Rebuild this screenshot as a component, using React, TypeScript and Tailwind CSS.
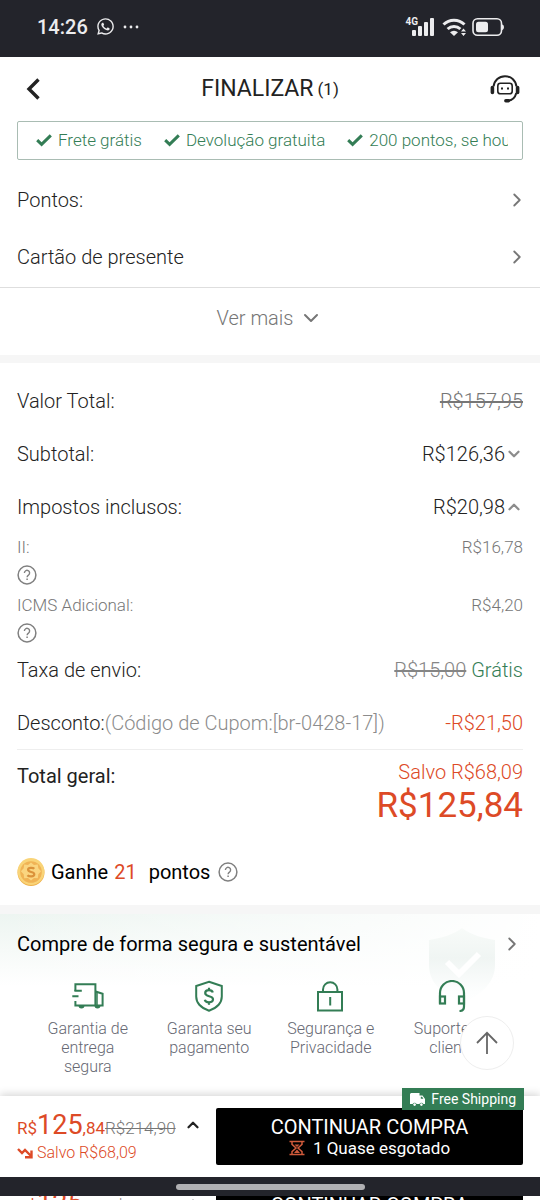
import React from "react";
import { FaWhatsapp } from "react-icons/fa";
import { ChevronDown, ChevronRight, ChevronUp } from "lucide-react";

const perks = ["Frete grátis", "Devolução gratuita", "200 pontos, se houver atraso"];

const taxes = [
  { label: "II:", value: "R$16,78" },
  { label: "ICMS Adicional:", value: "R$4,20" },
];

const HelpIcon: React.FC = () => (
  <svg viewBox="0 0 20 20" className="w-5 h-5 text-[#808080]" fill="none" stroke="currentColor">
    <circle cx="10" cy="10" r="8.9" strokeWidth="1.5" />
    <path d="M7.400 7.900a2.600 2.600 0 1 1 4.200 2.100c-.9.7-1.500 1.100-1.500 2.300" strokeWidth="1.400" />
    <path d="M10.100 13.600v1.500" strokeWidth="1.500" />
  </svg>
);

const CheckIcon: React.FC = () => (
  <svg viewBox="0 0 16 14" className="w-4 h-[14px] shrink-0" fill="none" stroke="#337d55" strokeWidth="3">
    <path d="M1.200 7.200 5.600 11.400 14.800 2.400" />
  </svg>
);

const SupportIcon: React.FC = () => (
  <svg viewBox="0 0 30 30" className="w-[30px] h-[30px]" fill="none" stroke="#222" strokeWidth="2">
    <path d="M3.600 12.500C4.300 6.400 9 2.200 15 2.200s10.700 4.200 11.400 10.300" />
    <path d="M2.400 13.500v5M27.600 13.500v5" strokeWidth="3.600" strokeLinecap="round" />
    <rect x="7.800" y="9.300" width="14.400" height="10.500" rx="2.600" strokeWidth="1.600" />
    <path d="M26.300 19c-1 4-4 7.300-8.600 7.800" />
    <path d="M15.800 26.800h2.600" strokeWidth="3.400" strokeLinecap="round" />
    <path d="M12 13.400v2.200M18 13.400v2.200" />
  </svg>
);

const CoinIcon: React.FC = () => (
  <svg viewBox="0 0 28 28" className="w-7 h-7">
    <circle cx="14" cy="14.500" r="13.500" fill="#eeb04a" />
    <circle cx="14" cy="13.500" r="13.400" fill="#f9d478" />
    <circle cx="14" cy="14" r="10.800" fill="#f0b355" />
    <path d="M14 4.500l3 2.400 3.800-.5.500 3.800 2.800 3-2.800 3-.5 4-3.800-.3-3 2.500-3-2.500-3.800.3-.5-4-2.800-3 2.800-3 .5-3.800 3.800.5z" fill="#fad580" />
    <path d="M17.300 10.700c-1.200-1.200-6.200-1.500-6.200 1 0 3 6.200 1.500 6.200 4.600 0 2.700-5.400 2.500-6.900.9" fill="none" stroke="#db923a" strokeWidth="2.200" />
  </svg>
);

const TruckIcon: React.FC = () => (
  <svg viewBox="0 0 32 32" className="w-8 h-8" fill="none" stroke="#337d55" strokeWidth="2">
    <path d="M3.400 11V4.200h20V25.500" />
    <path d="M2.400 10.800h7.400M.3 16.200h6.200M3.400 21v4.500h27.200V13.800l-7-2.300" />
    <path d="M25 12v13" strokeWidth="1.500" />
    <path d="M6.500 25.500a3 3 0 0 0 6 0zM22.500 25.500a3 3 0 0 0 6 0z" fill="#337d55" stroke="none" />
  </svg>
);

const ShieldMoneyIcon: React.FC = () => (
  <svg viewBox="0 0 32 32" className="w-8 h-8" fill="none" stroke="#337d55" strokeWidth="2">
    <path d="M16 1.800 28.800 6v10.500c0 6.800-5.300 11.500-12.800 14.200C8.500 28 3.200 23.300 3.200 16.500V6z" />
    <path d="M19.800 12.500c-.5-1.700-1.900-2.300-3.800-2.300-2.300 0-3.800 1-3.800 2.900 0 4.400 7.800 1.800 7.800 6.200 0 1.900-1.700 3-4 3-2.200 0-3.800-.8-4.200-2.600M16 7.700v2.500M16 22.300v2.500" strokeWidth="2.200" />
  </svg>
);

const LockIcon: React.FC = () => (
  <svg viewBox="0 0 32 32" className="w-8 h-8" fill="none" stroke="#337d55" strokeWidth="2">
    <rect x="3" y="12" width="24" height="18.500" />
    <path d="M8 12V9.500a7.200 7.200 0 0 1 14.400 0V12M15.200 17v8.500" />
  </svg>
);

const HeadsetIcon: React.FC = () => (
  <svg viewBox="0 0 32 32" className="w-8 h-8" fill="none" stroke="#337d55" strokeWidth="2.200">
    <path d="M4 23.500V13a12 12 0 0 1 24 0v13.500c0 3-1.500 4.500-4.500 4.500" />
    <rect x="4" y="16.500" width="5" height="7" />
    <rect x="23" y="16.500" width="5" height="7" />
  </svg>
);

const guarantees = [
  { icon: <TruckIcon />, label: "Garantia de entrega segura" },
  { icon: <ShieldMoneyIcon />, label: "Garanta seu pagamento" },
  { icon: <LockIcon />, label: "Segurança e Privacidade" },
  { icon: <HeadsetIcon />, label: "Suporte ao cliente" },
];

const StatusBar: React.FC = () => (
  <div className="h-[57px] shrink-0 bg-[#23242b] text-[#ececee] flex items-center justify-between pl-[37px] pr-[35px] pb-1">
    <div className="flex items-center gap-2">
      <span className="text-xl font-medium">14:26</span>
      <FaWhatsapp size={19} />
      <svg viewBox="0 0 16 4" className="w-4 h-1" fill="currentColor">
        <circle cx="2" cy="2" r="1.400" />
        <circle cx="8" cy="2" r="1.400" />
        <circle cx="14" cy="2" r="1.400" />
      </svg>
    </div>
    <div className="flex items-center gap-1">
      <div className="flex items-start">
        <span className="text-[10px] leading-[10px] font-bold -mr-[6px]">4G</span>
        <svg viewBox="0 0 22 20" className="w-[22px] h-5" fill="currentColor">
          <rect y="13" width="4" height="6" rx="1" />
          <rect x="6" y="9" width="4" height="10" rx="1" />
          <rect x="12" y="5" width="4" height="14" rx="1" />
          <rect x="18" y="1" width="4" height="18" rx="1" />
        </svg>
      </div>
      <svg viewBox="0 0 26 20" className="w-[26px] h-5 ml-1" fill="none" stroke="currentColor" strokeWidth="3">
        <path d="M1.500 7.500a15 15 0 0 1 21 0" />
        <path d="M5.600 12a9.500 9.500 0 0 1 12.800 0" />
        <path d="M8 15.300a6 6 0 0 1 8 0L12 19z" fill="currentColor" stroke="none" />
        <path d="M19 14.500l2.500-3 2.500 3zM19 16l2.500 3 2.500-3z" fill="currentColor" stroke="none" />
      </svg>
      <svg viewBox="0 0 33 20" className="w-[33px] h-5" fill="none" stroke="currentColor" strokeWidth="1.600">
        <rect x="1" y="1.800" width="28.500" height="16.500" rx="4.500" />
        <rect x="4" y="4.800" width="12" height="10.500" rx="2.500" fill="currentColor" stroke="none" />
        <path d="M30 7.500c2.600 0 2.600 5.400 0 5.400z" fill="currentColor" stroke="none" />
      </svg>
    </div>
  </div>
);

const CheckoutBar: React.FC = () => (
  <div className="flex items-center justify-between bg-white px-[17px] py-3">
    <div>
      <div className="flex items-center gap-2">
        <div className="h-8 text-[17px] leading-8 whitespace-nowrap">
          <span className="text-[#dd4a26]">
            R$<span className="text-[27px]">125</span>,84
          </span>
          <s className="font-light text-[#767676]">R$214,90</s>
        </div>
        <button type="button" aria-label="Ver detalhes">
          <ChevronUp size={18} strokeWidth={3} />
        </button>
      </div>
      <div className="flex items-center gap-1 text-base leading-6 font-light text-[#dd4a26]">
        <svg viewBox="0 0 16 12" className="w-4 h-3" fill="none" stroke="currentColor" strokeWidth="2.400">
          <path d="M1 2l4 4 3-3 6 6M14.500 3.500v6.800H8" />
        </svg>
        Salvo R$68,09
      </div>
    </div>
    <button type="button" className="relative w-[307px] h-[57px] rounded-xs bg-black text-white">
      <span className="absolute -right-px -top-5 h-[22px] bg-[#337d55] px-2 flex items-center gap-[6px] text-sm leading-5">
        <svg viewBox="0 0 15 13" className="w-[15px] h-[13px]" fill="white">
          <path d="M1 0h8.500v2.500h3L15 6v5h-1.600a2.200 2.200 0 0 0-4 0H6.600a2.200 2.200 0 0 0-4 0H0V1z" />
          <circle cx="4.600" cy="11.600" r="1.300" />
          <circle cx="11.400" cy="11.600" r="1.300" />
          <path d="M10.800 3.700h1.300l1.300 2h-2.600z" fill="#337d55" />
        </svg>
        Free Shipping
      </span>
      <span className="block text-xl leading-[22px]">CONTINUAR COMPRA</span>
      <span className="flex items-center justify-center gap-2 text-[17px] leading-5">
        <svg viewBox="0 0 16 16" className="w-4 h-4" fill="none" stroke="#cf5a3b" strokeWidth="1.500">
          <path d="M.5 1.500h15M.5 14.500h15M3 1.500v2.800L7 8l-4 3.700v2.800M13 1.500v2.800L9 8l4 3.700v2.800" />
          <path d="M5.500 4.500h5L8 7zM8 9.500l3 3.500H5z" fill="#cf5a3b" stroke="none" />
        </svg>
        1 Quase esgotado
      </span>
    </button>
  </div>
);

const App: React.FC = () => {
  return (
    <div className="min-h-screen flex flex-col bg-white text-[#222] text-xl font-['Roboto',sans-serif]">
      <StatusBar />

      <header className="h-16 shrink-0 flex items-center justify-between px-5">
        <button type="button" aria-label="Voltar" className="w-[30px]">
          <svg viewBox="0 0 26 26" className="w-[26px] h-[26px]" fill="none" stroke="#222" strokeWidth="3.400">
            <path d="M18.500 3.500 9 13l9.500 9.500" />
          </svg>
        </button>
        <h1 className="text-[23px]">
          FINALIZAR<span className="text-[17px] align-[1px] ml-1">(1)</span>
        </h1>
        <button type="button" aria-label="Atendimento">
          <SupportIcon />
        </button>
      </header>

      <main className="flex-1">
        <div className="mx-[17px] h-[39px] pl-[18px] pr-[14px] border border-[#a9bcb3] rounded-xs flex">
          <ul className="flex items-center gap-[22px] overflow-hidden text-[17px] font-light text-[#337d55]">
            {perks.map((perk) => (
              <li key={perk} className="flex items-center gap-[6px] whitespace-nowrap">
                <CheckIcon />
                {perk}
              </li>
            ))}
          </ul>
        </div>

        <div className="pt-[11px] pb-[2px] border-b border-[#dedede] font-light">
          {["Pontos:", "Cartão de presente"].map((item) => (
            <button key={item} type="button" className="w-full h-[57px] pl-[17px] pr-3 flex items-center justify-between">
              {item}
              <ChevronRight size={22} strokeWidth={2} className="text-[#777]" />
            </button>
          ))}
        </div>
        <button type="button" className="w-full h-[67px] pb-2 flex items-center justify-center gap-[6px] font-light text-[#767676]">
          Ver mais
          <ChevronDown size={24} strokeWidth={2} />
        </button>

        <div className="h-2 bg-[#f6f6f6]"></div>

        <section className="px-[17px] pt-[11px] font-light">
          <div className="h-[53px] flex items-center justify-between">
            <span>Valor Total:</span>
            <s className="text-[#767676]">R$157,95</s>
          </div>
          <div className="h-[53px] flex items-center justify-between">
            <span>Subtotal:</span>
            <button type="button" className="flex items-center">
              R$126,36
              <ChevronDown size={18} strokeWidth={3} className="text-[#8c8c8c]" />
            </button>
          </div>
          <div className="h-[53px] flex items-center justify-between">
            <span>Impostos inclusos:</span>
            <button type="button" className="flex items-center">
              R$20,98
              <ChevronUp size={18} strokeWidth={3} className="text-[#8c8c8c]" />
            </button>
          </div>
          <div className="flex flex-col gap-[6px] text-[17px] leading-7 text-[#777]">
            {taxes.map((tax) => (
              <div key={tax.label}>
                <div className="flex justify-between">
                  <span>{tax.label}</span>
                  <span>{tax.value}</span>
                </div>
                <button type="button" aria-label={`Ajuda ${tax.label}`} className="block mt-1">
                  <HelpIcon />
                </button>
              </div>
            ))}
          </div>
          <div className="h-[53px] flex items-center justify-between">
            <span>Taxa de envio:</span>
            <span className="text-[#337d55]">
              <s className="text-[#858585]">R$15,00</s> Grátis
            </span>
          </div>
          <div className="h-[54px] flex items-center justify-between border-b border-[#eeeeee]">
            <span>
              Desconto:<span className="text-[#8c8c8c]">(Código de Cupom:[br-0428-17])</span>
            </span>
            <span className="text-[#dd4a26]">-R$21,50</span>
          </div>
          <div className="flex items-start justify-between">
            <span className="pt-3 font-normal">Total geral:</span>
            <div className="pt-2 text-right text-[#dd4a26]">
              <div className="leading-7">Salvo R$68,09</div>
              <div className="text-[35px] leading-10 font-normal">R$125,84</div>
            </div>
          </div>
          <div className="h-[79px] pt-3 flex items-center font-normal text-black">
            <CoinIcon />
            <span className="ml-[6px]">Ganhe</span>
            <span className="ml-[6px] text-[#dd4a26]">21</span>
            <span className="ml-3 mr-2">pontos</span>
            <button type="button" aria-label="Ajuda pontos">
              <HelpIcon />
            </button>
          </div>
        </section>

        <div className="h-[9px] bg-[#f6f6f6]"></div>

        <section className="relative bg-linear-to-b from-[#edf5f1] to-white to-40%">
          <div className="absolute inset-0 bg-linear-to-r from-transparent to-white"></div>
          <svg viewBox="0 0 70 78" className="absolute right-[43px] top-3 w-[70px] h-[78px]">
            <defs>
              <linearGradient id="shield" x1="0" y1="0" x2="0" y2="1">
                <stop offset="0" stopColor="#f8fbf9" />
                <stop offset="0.400" stopColor="#f0f5f3" />
                <stop offset="0.850" stopColor="#fdfefe" />
                <stop offset="1" stopColor="#ffffff" />
              </linearGradient>
            </defs>
            <path d="M35 2C44 9 56 12 68 14v25c0 18-14 30-33 38C16 69 2 57 2 39V14C14 12 26 9 35 2z" fill="url(#shield)" />
            <path d="M20 36 32 48 52 28" fill="none" stroke="white" strokeWidth="6" />
          </svg>
          <div className="relative">
            <button type="button" className="w-full h-[60px] px-[17px] flex items-center justify-between text-black">
              Compre de forma segura e sustentável
              <ChevronRight size={22} className="text-[#777]" />
            </button>
            <ul className="px-[27px] pt-[6px] pb-[18px] grid grid-cols-4">
              {guarantees.map((g) => (
                <li key={g.label} className="px-4 flex flex-col items-center gap-[7px] text-center">
                  {g.icon}
                  <span className="text-base leading-[19px] font-light text-[#666873]">{g.label}</span>
                </li>
              ))}
            </ul>
            <button
              type="button"
              aria-label="Voltar ao topo"
              className="absolute right-[26px] bottom-6 w-[54px] h-[54px] rounded-full border border-[#eeeeee] bg-white flex items-center justify-center"
            >
              <svg viewBox="0 0 24 24" className="w-6 h-6" fill="none" stroke="#666" strokeWidth="1.800">
                <path d="M12 23V2M2 12 12 1.800 22 12" />
              </svg>
            </button>
          </div>
        </section>
      </main>

      <footer className="sticky bottom-0 shadow-[0_-2px_8px_rgba(0,0,0,0.16)]">
        <CheckoutBar />
        <div className="h-[19px] bg-[#23242b] flex items-center justify-center">
          <div className="w-[35%] h-[6px] rounded-full bg-[#b0b0b3]"></div>
        </div>
        <div className="h-1 overflow-hidden" aria-hidden="true" inert>
          <div className="-mt-[22px]">
            <CheckoutBar />
          </div>
        </div>
      </footer>
    </div>
  );
};

export default App;
